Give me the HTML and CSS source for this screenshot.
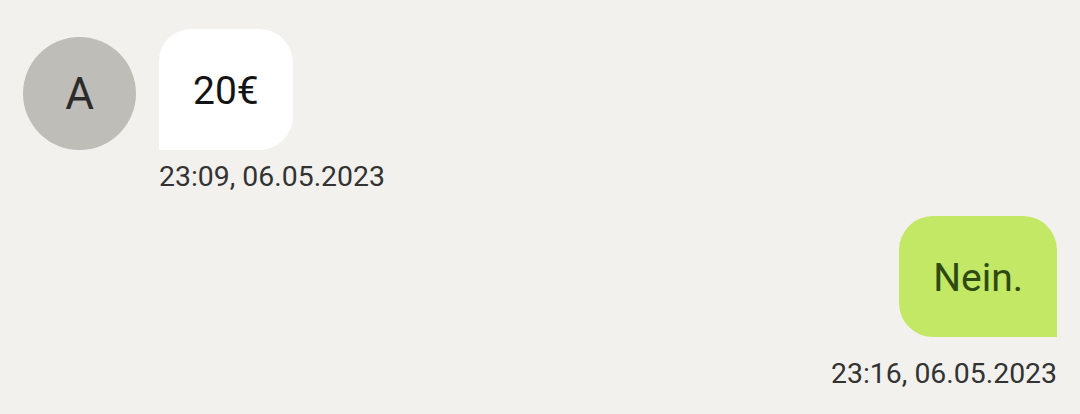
FILE: index.html
```html
<!DOCTYPE html>
<html lang="de">
<head>
<meta charset="utf-8">
<title>Chat</title>
<link rel="stylesheet" href="styles.css">
</head>
<body>
<main class="thread">
  <section class="msg msg--in">
    <div class="msg__row">
      <div class="avatar">A</div>
      <div class="bubble bubble--in">20€</div>
    </div>
    <time class="stamp stamp--in">23:09, 06.05.2023</time>
  </section>
  <section class="msg msg--out">
    <div class="bubble bubble--out">Nein.</div>
    <time class="stamp stamp--out">23:16, 06.05.2023</time>
  </section>
</main>
</body>
</html>
```

FILE: styles.css
```css
html, body {
  margin: 0;
  padding: 0;
  background: #f2f1ed;
  font-family: Roboto, "Noto Sans", sans-serif;
}

.thread {
  display: flex;
  flex-direction: column;
  padding: 29px 23px 0 23px;
}

.msg {
  display: flex;
  flex-direction: column;
}

.msg--out {
  align-items: flex-end;
  margin-top: 23px;
}

.msg__row {
  display: flex;
  align-items: flex-end;
  gap: 23px;
}

.avatar {
  width: 113px;
  height: 113px;
  border-radius: 50%;
  background: #bfbdb8;
  color: #2b2b2b;
  font-size: 44px;
  display: flex;
  align-items: center;
  justify-content: center;
}

.bubble {
  font-size: 39px;
  line-height: 45px;
  padding: 40px 34px 36px;
}

.bubble--in {
  background: #ffffff;
  color: #141414;
  border-radius: 32px 34px 34px 0;
}

.bubble--out {
  background: #c2e865;
  color: #2e4a12;
  border-radius: 34px 34px 0 34px;
}

.stamp {
  display: block;
  font-size: 28.4px;
  color: #333333;
}

.stamp--in {
  margin: 10px 0 0 136px;
}

.stamp--out {
  margin-top: 20px;
}
```
